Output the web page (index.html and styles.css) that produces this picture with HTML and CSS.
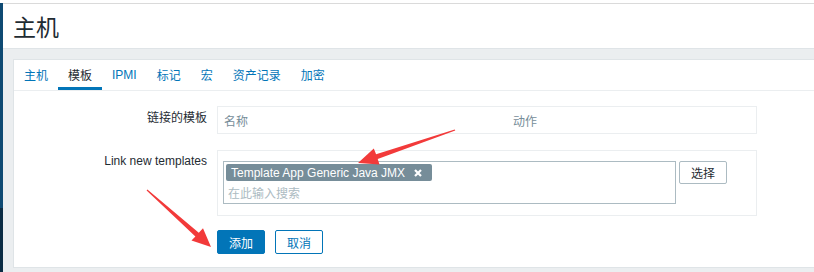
FILE: index.html
```html
<!DOCTYPE html>
<html lang="zh-CN">
<head>
    <meta charset="UTF-8">
    <link rel="stylesheet" href="styles.css">
    <title>主机</title>
</head>
<body>
    <div class="layout">
        <div class="side"></div>
        <div class="main">
            <header class="page-header">
                <h1>主机</h1>
            </header>
            <main class="wrap">
                <section class="panel">
                    <ul class="tabs">
                        <li><a href="#">主机</a></li>
                        <li class="active"><a href="#">模板</a></li>
                        <li><a href="#">IPMI</a></li>
                        <li><a href="#">标记</a></li>
                        <li><a href="#">宏</a></li>
                        <li><a href="#">资产记录</a></li>
                        <li><a href="#">加密</a></li>
                    </ul>
                    <form class="form-grid">
                        <label class="label first">链接的模板</label>
                        <div class="box linked">
                            <span class="col-name">名称</span>
                            <span class="col-action">动作</span>
                        </div>

                        <label class="label second">Link new templates</label>
                        <div class="box new">
                            <div class="multiselect">
                                <span class="tag">Template App Generic Java JMX
                                    <svg class="tag-x" width="8" height="8" viewBox="0 0 8 8"><path d="M1 1L7 7M7 1L1 7" stroke="#fff" stroke-width="2.2"/></svg>
                                </span>
                                <input class="search" type="text" placeholder="在此输入搜索">
                            </div>
                            <button type="button" class="btn-select">选择</button>
                        </div>

                        <div></div>
                        <div class="actions">
                            <button type="submit" class="btn-main">添加</button>
                            <button type="button" class="btn-alt">取消</button>
                        </div>
                    </form>
                </section>
            </main>
        </div>
    </div>

    <svg class="marks" width="814" height="272" viewBox="0 0 814 272">
        <polygon fill="#f23a3a" points="358,163 379.5,164.6 377.7,159 455.3,130.6 454.7,129.4 376.1,154.2 373.8,148.6"/>
        <polygon fill="#f23a3a" points="211,247 191.5,240.6 195.4,236.6 146.6,190.5 147.4,189.5 198.8,232.8 203,228.2"/>
    </svg>
</body>
</html>
```

FILE: styles.css
```css
body {
  margin: 0;
  padding-top: 3px;
  background: #fff;
  font-family: "Liberation Sans", Arial, "Noto Sans CJK SC", sans-serif;
  font-size: 12px;
  color: #1f2c33;
  position: relative;
  height: 269px;
  overflow: hidden;
}

.layout {
  display: flex;
  height: 269px;
}

.side {
  width: 3px;
  flex-shrink: 0;
  background: linear-gradient(#0e4a73 0, #0e4a73 205px, #0b2c44 205px);
}

.main {
  flex: 1;
  display: flex;
  flex-direction: column;
  background: #ebeef0;
  border-top: 1px solid #dadada;
}

.page-header {
  background: #fff;
  height: 44px;
  border-bottom: 1px solid #dfe4e7;
  padding-left: 10px;
  display: flex;
  align-items: center;
}

.page-header h1 {
  margin: 0;
  font-size: 23px;
  font-weight: normal;
  color: #1f2c33;
}

.wrap {
  padding: 10px 0 0 10px;
}

.panel {
  background: #fff;
  border: 1px solid #dfe4e7;
  border-right: none;
  height: 207px;
}

.tabs {
  list-style: none;
  margin: 0;
  padding: 0;
  display: flex;
  height: 30px;
  border-bottom: 1px solid #ebeef0;
}

.tabs li {
  padding: 0 10px;
  display: flex;
  align-items: center;
  border-bottom: 3px solid transparent;
  padding-top: 2px;
}

.tabs a {
  color: #0275b8;
  text-decoration: none;
}

.tabs li.active {
  border-bottom-color: #0275b8;
}

.tabs li.active a {
  color: #1f2c33;
}

.form-grid {
  display: grid;
  grid-template-columns: 193px 540px;
  column-gap: 10px;
  row-gap: 16px;
  padding-top: 15px;
}

.label {
  text-align: right;
  line-height: 18px;
}

.label.first {
  padding-top: 3px;
}

.label.second {
  padding-top: 2px;
}

.box {
  border: 1px solid #ebeef0;
  box-sizing: border-box;
}

.linked {
  height: 28px;
  display: flex;
  align-items: center;
  padding-left: 6px;
  color: #768d99;
}

.col-name {
  width: 289px;
}

.new {
  height: 66px;
  padding: 10px 5px;
  display: flex;
  align-items: flex-start;
  gap: 3px;
}

.multiselect {
  width: 453px;
  height: 43px;
  box-sizing: border-box;
  border: 1px solid #acbbc2;
  padding: 2px;
}

.tag {
  display: inline-flex;
  align-items: center;
  gap: 9px;
  height: 17px;
  padding: 0 10px 0 5px;
  background: #768d99;
  color: #fff;
  border-radius: 2px;
}

.tag-x {
  display: block;
}

.search {
  display: block;
  width: 100%;
  border: none;
  outline: none;
  padding: 6px 0 0 2px;
  font: inherit;
  color: #1f2c33;
}

.search::placeholder {
  color: #acbbc2;
}

.btn-select {
  width: 48px;
  height: 23px;
  border: 1px solid #acbbc2;
  border-radius: 2px;
  background: #fff;
  font: inherit;
  color: #1f2c33;
  padding: 0;
}

.actions {
  display: flex;
  gap: 10px;
  margin-top: -2px;
}

.actions button {
  width: 48px;
  height: 24px;
  border-radius: 2px;
  font: inherit;
  padding: 0;
}

.btn-main {
  background: #0275b8;
  border: 1px solid #0275b8;
  color: #fff;
}

.btn-alt {
  background: #fff;
  border: 1px solid #0275b8;
  color: #0275b8;
}

.marks {
  position: absolute;
  left: 0;
  top: 0;
  pointer-events: none;
}
```
